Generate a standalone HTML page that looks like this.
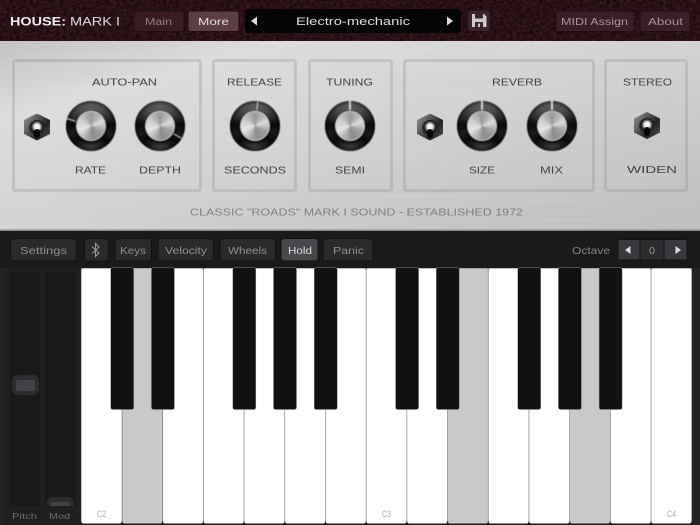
<!DOCTYPE html>
<html><head><meta charset="utf-8"><style>
html,body{margin:0;padding:0;background:#1a1a1a}
#p{position:relative;width:700px;height:525px;overflow:hidden;font-family:"Liberation Sans",sans-serif}
svg{position:absolute;left:0;top:0}
text{font-family:"Liberation Sans",sans-serif}
.s{filter:blur(.3px)}
.k{position:absolute;width:50px;height:50px;border-radius:50%;top:101px;background:#0a0a0a;filter:blur(.4px)}
.k:before{content:"";position:absolute;inset:0;border-radius:50%;background:radial-gradient(circle,transparent 0 60%,rgba(0,0,0,.55) 72%,transparent 82%),conic-gradient(#5a5a5a 0deg,#4c4c4c 35deg,#2a2a2a 65deg,#0a0a0a 85deg,#1c1c1c 110deg,#0a0a0a 135deg,#2e2e2e 165deg,#3a3a3a 180deg,#2e2e2e 195deg,#0a0a0a 225deg,#1c1c1c 250deg,#0a0a0a 275deg,#2a2a2a 295deg,#4c4c4c 325deg,#5a5a5a 360deg)}
.k:after{content:"";position:absolute;left:11px;top:11px;width:28px;height:28px;border-radius:50%;background:conic-gradient(from 0deg,#9a9a9a 0deg,#b8b8b8 40deg,#dedede 70deg,#a0a0a0 115deg,#8c8c8c 170deg,#bcbcbc 215deg,#e6e6e6 250deg,#d0d0d0 295deg,#9a9a9a 360deg);box-shadow:0 0 0 1px #ddd,0 2px 3px 1px #000}
.k i{position:absolute;left:24.300px;top:0;width:1.400px;height:9px;background:#d8d8d8;transform-origin:.7px 25px;z-index:2}
.t{position:absolute;width:26px;height:27px;clip-path:polygon(50% 0,100% 24%,100% 76%,50% 100%,0 76%,0 24%);background:linear-gradient(125deg,#9a9a9a,#5a5a5a 35%,#222 65%,#555);filter:blur(.35px)}
.t:before{content:"";position:absolute;left:5px;top:6px;width:16px;height:16px;border-radius:50%;background:radial-gradient(circle at 50% 42%,#f4f4f4 0 2.500px,#8a8a8a 4px,#141414 6px,#333 8px)}
.t:after{content:"";position:absolute;left:10px;top:15px;width:6px;height:9px;border-radius:3px;background:#050505}
</style></head><body><div id="p">
<svg width="700" height="525" viewBox="0 0 700 525">
<defs>
<linearGradient id="metal" x1="0" y1="0" x2="1" y2="1">
<stop offset="0" stop-color="#c2c2c2"/><stop offset=".2" stop-color="#dcdcdc"/><stop offset=".5" stop-color="#d2d2d2"/><stop offset="1" stop-color="#bdbdbd"/></linearGradient>
<filter id="lea" x="0" y="0" width="100%" height="100%"><feTurbulence type="fractalNoise" baseFrequency=".3 .5" numOctaves="2" seed="4"/><feGaussianBlur stdDeviation=".4"/><feColorMatrix values="0 0 0 0 0 0 0 0 0 0 0 0 0 0 0 1.4 0 0 0 -.3"/></filter>
<filter id="br" x="0" y="0" width="100%" height="100%"><feTurbulence type="fractalNoise" baseFrequency=".006 .7" numOctaves="2" seed="7"/><feColorMatrix values="0 0 0 0 1 0 0 0 0 1 0 0 0 0 1 1 0 0 0 -.45"/></filter>
</defs>
<rect width="700" height="41" fill="#451c25"/>
<rect width="700" height="41" fill="#000" filter="url(#lea)"/>
<rect y="41" width="700" height="190" fill="url(#metal)"/>
<rect y="41" width="700" height="190" filter="url(#br)" opacity=".25"/>
<rect y="229.500" width="700" height="1.500" fill="#8a8a8a"/>
<rect y="231" width="700" height="37" fill="#1a1a1a"/>

<g fill="none" stroke="#8f8f8f" stroke-opacity=".3" stroke-width="3">
<rect x="13.500" y="60.500" width="187" height="130" rx="2"/>
<rect x="213.500" y="60.500" width="82" height="130" rx="2"/>
<rect x="309.500" y="60.500" width="82" height="130" rx="2"/>
<rect x="404.500" y="60.500" width="189" height="130" rx="2"/>
<rect x="605.500" y="60.500" width="81" height="130" rx="2"/>
</g>

<!-- header buttons -->
<g stroke="#220c11" stroke-width="1">
<rect x="134" y="11" width="50" height="20.500" rx="2.500" fill="#3c1c23"/>
<rect x="188" y="11" width="51" height="20.500" rx="2.500" fill="#5c3e45"/>
<rect x="556" y="11" width="78" height="20.500" rx="2.500" fill="#3c1f26"/>
<rect x="640" y="11" width="50" height="20.500" rx="2.500" fill="#3c1f26"/>
<rect x="467.500" y="10" width="23" height="21.500" rx="3" fill="#3c2229"/>
</g>
<rect x="245" y="9" width="216" height="24" rx="3" fill="#050505"/>
<path d="M251 21l6-4.500v9z M453 21l-6-4.500v9z" fill="#ddd"/>
<path d="M472 14h12l2.500 2.500V27H472z" fill="#ccc"/>
<rect x="475" y="14" width="8" height="4.500" fill="#3c2229"/>
<rect x="475" y="22" width="8" height="5" fill="#3c2229"/>
<rect x="478" y="23.500" width="2" height="3.500" fill="#ccc"/>

<g class="s" font-size="12" fill="#eee">
<text x="10" y="25.500" font-weight="bold" textLength="56" lengthAdjust="spacingAndGlyphs">HOUSE:</text>
<text x="70" y="25.500" fill="#ddd" textLength="50" lengthAdjust="spacingAndGlyphs">MARK I</text>
</g>
<g class="s" font-size="10.500">
<text x="145" y="25" fill="#8e7f82" textLength="27" lengthAdjust="spacingAndGlyphs">Main</text>
<text x="198" y="25" fill="#e2dcdd" textLength="31" lengthAdjust="spacingAndGlyphs">More</text>
<text x="296" y="25" fill="#ddd" font-size="11" textLength="114" lengthAdjust="spacingAndGlyphs">Electro-mechanic</text>
<text x="561" y="25" fill="#a39598" textLength="67" lengthAdjust="spacingAndGlyphs">MIDI Assign</text>
<text x="648" y="25" fill="#a39598" textLength="35" lengthAdjust="spacingAndGlyphs">About</text>
</g>

<!-- panel labels -->
<g class="s" font-size="10" fill="#444">
<text x="92" y="85.500" textLength="65" lengthAdjust="spacingAndGlyphs">AUTO-PAN</text>
<text x="75" y="173.500" textLength="31" lengthAdjust="spacingAndGlyphs">RATE</text>
<text x="139" y="173.500" textLength="42" lengthAdjust="spacingAndGlyphs">DEPTH</text>
<text x="227" y="85.500" textLength="55" lengthAdjust="spacingAndGlyphs">RELEASE</text>
<text x="224" y="173.500" textLength="62" lengthAdjust="spacingAndGlyphs">SECONDS</text>
<text x="326" y="85.500" textLength="47" lengthAdjust="spacingAndGlyphs">TUNING</text>
<text x="335" y="173.500" textLength="30" lengthAdjust="spacingAndGlyphs">SEMI</text>
<text x="492" y="85.500" textLength="50" lengthAdjust="spacingAndGlyphs">REVERB</text>
<text x="469" y="173.500" textLength="26" lengthAdjust="spacingAndGlyphs">SIZE</text>
<text x="540" y="173.500" textLength="23" lengthAdjust="spacingAndGlyphs">MIX</text>
<text x="623" y="85.500" textLength="49" lengthAdjust="spacingAndGlyphs">STEREO</text>
<text x="627" y="173" textLength="50" lengthAdjust="spacingAndGlyphs">WIDEN</text>
<text x="190" y="215.500" fill="#808080" textLength="333" lengthAdjust="spacingAndGlyphs">CLASSIC "ROADS" MARK I SOUND - ESTABLISHED 1972</text>
</g>

<!-- toolbar -->
<g stroke="#131313" stroke-width="1">
<rect x="10.500" y="238.500" width="66" height="22.500" rx="3" fill="#2a2a2a"/>
<rect x="84.500" y="238.500" width="24" height="22.500" rx="3" fill="#2a2a2a"/>
<rect x="115" y="238.500" width="36.500" height="22.500" rx="3" fill="#2a2a2a"/>
<rect x="158" y="238.500" width="55.500" height="22.500" rx="3" fill="#2a2a2a"/>
<rect x="220" y="238.500" width="55.500" height="22.500" rx="3" fill="#2a2a2a"/>
<rect x="281" y="238.500" width="37" height="22.500" rx="3" fill="#48484c"/>
<rect x="323" y="238.500" width="50" height="22.500" rx="3" fill="#2a2a2a"/>
<rect x="618" y="239.500" width="22" height="20.500" fill="#3a3a3e"/>
<rect x="640" y="239.500" width="24" height="20.500" fill="#2c2c2e"/>
<rect x="664" y="239.500" width="23" height="20.500" fill="#3a3a3e"/>
</g>
<path d="M92 246.500l7 6.500-3.500 3.500v-13l3.500 3.500-7 6.500" fill="none" stroke="#999" stroke-width="1.100"/>
<path d="M625 250l5.500-4v8z M681 250l-5.500-4v8z" fill="#ddd"/>
<g class="s" font-size="10.500" fill="#8f8f8f">
<text x="20" y="254" textLength="47" lengthAdjust="spacingAndGlyphs">Settings</text>
<text x="120" y="254" textLength="26" lengthAdjust="spacingAndGlyphs">Keys</text>
<text x="165" y="254" textLength="42" lengthAdjust="spacingAndGlyphs">Velocity</text>
<text x="228" y="254" textLength="39" lengthAdjust="spacingAndGlyphs">Wheels</text>
<text x="288" y="254" fill="#ddd" textLength="24" lengthAdjust="spacingAndGlyphs">Hold</text>
<text x="333" y="254" textLength="31" lengthAdjust="spacingAndGlyphs">Panic</text>
<text x="572" y="254" fill="#858585" textLength="38" lengthAdjust="spacingAndGlyphs">Octave</text>
<text x="649" y="254" fill="#999" font-size="10" textLength="6" lengthAdjust="spacingAndGlyphs">0</text>
</g>

<!-- wheels -->
<rect y="268" width="81" height="257" fill="#232323"/>
<rect x="5" y="268" width="74" height="257" fill="#1f1f1f"/>
<rect x="10" y="272" width="30" height="234" fill="#191919"/>
<rect x="45" y="272" width="30" height="234" fill="#191919"/>
<rect x="12" y="375" width="27" height="20" rx="6" fill="#2d2d30"/>
<rect x="16" y="380" width="19" height="11" rx="2" fill="#434347"/>
<path d="M47 506v-3a6 6 0 0 1 6-6h15a6 6 0 0 1 6 6v3z" fill="#2d2d30"/>
<path d="M51 506v-2a2 2 0 0 1 2-2h15a2 2 0 0 1 2 2v2z" fill="#434347"/>
<g font-size="8" fill="#6e6e6e">
<text x="12" y="519" textLength="25" lengthAdjust="spacingAndGlyphs">Pitch</text>
<text x="49" y="519" textLength="21" lengthAdjust="spacingAndGlyphs">Mod</text>
</g>

<!-- keys -->
<rect x="81" y="268" width="611" height="257" fill="#1a1a1a"/>
<rect x="692" y="268" width="8" height="257" fill="#242424"/>
<rect x="81" y="268" width="611" height="253" fill="#808080"/>
<g fill="#fff">
<rect x="81.500" y="268.500" width="40.200" height="255" rx="2"/>
<rect x="122.500" y="268.500" width="39.700" height="255" rx="2" fill="#c9c9c9"/>
<rect x="163" y="268.500" width="40" height="255" rx="2"/>
<rect x="203.700" y="268.500" width="40" height="255" rx="2"/>
<rect x="244.400" y="268.500" width="40" height="255" rx="2"/>
<rect x="285.100" y="268.500" width="40" height="255" rx="2"/>
<rect x="325.800" y="268.500" width="40" height="255" rx="2"/>
<rect x="366.500" y="268.500" width="40" height="255" rx="2"/>
<rect x="407.200" y="268.500" width="40" height="255" rx="2"/>
<rect x="447.900" y="268.500" width="40" height="255" rx="2" fill="#c9c9c9"/>
<rect x="488.600" y="268.500" width="40" height="255" rx="2"/>
<rect x="529.300" y="268.500" width="40" height="255" rx="2"/>
<rect x="570" y="268.500" width="40" height="255" rx="2" fill="#c9c9c9"/>
<rect x="610.700" y="268.500" width="40" height="255" rx="2"/>
<rect x="651.400" y="268.500" width="40" height="255" rx="2"/>
</g>
<g fill="#111" stroke="#888" stroke-width=".5">
<rect x="110.700" y="267.500" width="23" height="142" rx="2"/>
<rect x="151.400" y="267.500" width="23" height="142" rx="2"/>
<rect x="232.800" y="267.500" width="23" height="142" rx="2"/>
<rect x="273.500" y="267.500" width="23" height="142" rx="2"/>
<rect x="314.200" y="267.500" width="23" height="142" rx="2"/>
<rect x="395.600" y="267.500" width="23" height="142" rx="2"/>
<rect x="436.300" y="267.500" width="23" height="142" rx="2"/>
<rect x="517.700" y="267.500" width="23" height="142" rx="2"/>
<rect x="558.400" y="267.500" width="23" height="142" rx="2"/>
<rect x="599.100" y="267.500" width="23" height="142" rx="2"/>
</g>
<g font-size="9" fill="#aaa">
<text x="97" y="517" textLength="9" lengthAdjust="spacingAndGlyphs">C2</text>
<text x="382" y="517" textLength="9" lengthAdjust="spacingAndGlyphs">C3</text>
<text x="667" y="517" textLength="9" lengthAdjust="spacingAndGlyphs">C4</text>
</g>
</svg>

<div class="t" style="left:24px;top:113.500px"></div>
<div class="k" style="left:65.500px"><i style="transform:rotate(-72deg)"></i></div>
<div class="k" style="left:135px"><i style="transform:rotate(120deg)"></i></div>
<div class="k" style="left:229.500px"><i style="transform:rotate(8deg)"></i></div>
<div class="k" style="left:325px"><i></i></div>
<div class="t" style="left:417px;top:113.500px"></div>
<div class="k" style="left:457px"><i></i></div>
<div class="k" style="left:527px"><i></i></div>
<div class="t" style="left:634px;top:112px"></div>
</div></body></html>
